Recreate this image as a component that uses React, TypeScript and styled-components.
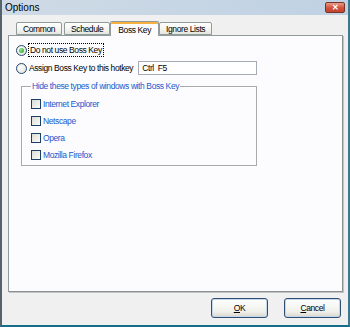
import React from "react";
import styled, { createGlobalStyle } from "styled-components";

const Global = createGlobalStyle`
  html, body { margin: 0; padding: 0; background: #f0f0f0; }
  body { font-family: "Liberation Sans", Arial, sans-serif; }
  * { box-sizing: border-box; }
`;

const Window = styled.div`
  width: 350px;
  height: 327px;
  display: flex;
  flex-direction: column;
  background: #f0f0f0;
  border-left: 2px solid #56626c;
  border-right: 2px solid #3e7890;
  border-bottom: 2px solid #147088;
  overflow: hidden;
`;

const TitleBar = styled.div`
  height: 15px;
  display: flex;
  align-items: center;
  justify-content: space-between;
  padding: 0 3px 0 3px;
  background: linear-gradient(to right, #cfdbe6, #bfd1e3);
`;

const Title = styled.span`
  font-size: 10px;
  color: #000;
`;

const CloseButton = styled.div`
  width: 20px;
  height: 11px;
  border-radius: 2px;
  border: 1px solid #7a3426;
  background: linear-gradient(#e89a88, #d2503a 55%, #c54431);
  color: #fff;
  font-size: 8px;
  font-weight: bold;
  display: flex;
  align-items: center;
  justify-content: center;
  line-height: 1;
`;

const Body = styled.div`
  flex: 1;
  display: flex;
  flex-direction: column;
  padding: 6px 5px 0 6px;
  font-size: 8.5px;
  letter-spacing: -0.4px;
`;

const TabStrip = styled.div`
  display: flex;
  align-items: flex-end;
  height: 14px;
  padding-left: 7px;
  position: relative;
  z-index: 1;
`;

const Tab = styled.div<{ $active?: boolean }>`
  color: #000;
  height: ${(p) => (p.$active ? "15px" : "13px")};
  padding: 0 ${(p) => (p.$active ? "7px" : "6px")};
  margin: 0 ${(p) => (p.$active ? "-1px" : "1px")};
  display: flex;
  align-items: center;
  border: 1px solid #919b9c;
  border-bottom: ${(p) => (p.$active ? "none" : "1px solid #919b9c")};
  border-radius: 2px 2px 0 0;
  background: ${(p) =>
    p.$active ? "#fcfcfe" : "linear-gradient(#ffffff, #f3f3ef 60%, #e6e6e0)"};
  box-shadow: ${(p) => (p.$active ? "inset 0 2px 0 #f5b240" : "none")};
  margin-bottom: ${(p) => (p.$active ? "-1px" : "0")};
  padding-top: ${(p) => (p.$active ? "2px" : "0")};
`;

const Panel = styled.div`
  height: 257px;
  background: #fcfcfe;
  border: 1px solid #919b9c;
  border-right-color: #8a9091;
  border-bottom-color: #8a9091;
  box-shadow: 1px 1px 0 #c4c4c4;
  display: flex;
  flex-direction: column;
  padding: 7px 0 0 7px;
`;

const OptionRow = styled.div`
  height: 14px;
  display: flex;
  align-items: center;
  gap: 2px;
  color: #000;
  margin-bottom: 4px;
`;

const Radio = styled.span<{ $checked?: boolean }>`
  width: 11px;
  height: 11px;
  border-radius: 50%;
  border: 1px solid #24486c;
  background: radial-gradient(circle at 40% 40%, #ffffff, #dcdcd4);
  display: flex;
  align-items: center;
  justify-content: center;
  &::after {
    content: "";
    display: ${(p) => (p.$checked ? "block" : "none")};
    width: 5px;
    height: 5px;
    border-radius: 50%;
    background: radial-gradient(circle at 35% 35%, #8de28d, #21a121);
  }
`;

const FocusLabel = styled.span`
  outline: 1px dotted #000;
  padding: 1px 1px;
`;

const Label = styled.span`
  padding: 1px 0;
`;

const HotkeyInput = styled.div`
  margin-left: 3px;
  width: 119px;
  height: 14px;
  border: 1px solid #a5acb5;
  background: #fff;
  padding: 0 3px;
  display: flex;
  align-items: center;
  white-space: pre;
`;

const GroupBox = styled.fieldset`
  margin: 2px 0 0 5px;
  padding: 7px 0 0 9px;
  width: 236px;
  height: 85px;
  border: 1px solid #a9a9a9;
  box-shadow: inset 1px 1px 0 #fff;
  display: flex;
  flex-direction: column;
  gap: 6px;
  min-inline-size: auto;
`;

const Legend = styled.legend`
  color: #2158cc;
  padding: 0 1px;
  margin-left: 0;
`;

const CheckRow = styled.label`
  display: flex;
  align-items: center;
  gap: 2px;
  height: 11px;
  color: #2158cc;
`;

const CheckBox = styled.span`
  width: 10px;
  height: 10px;
  border: 1px solid #1c3f64;
  background: linear-gradient(135deg, #dcdcd6, #fbfbf9);
`;

const ButtonRow = styled.div`
  display: flex;
  justify-content: flex-end;
  gap: 16px;
  padding: 6px 2px 0 0;
`;

const Button = styled.div`
  width: 57px;
  height: 20px;
  border: 1px solid #2f5075;
  border-radius: 3px;
  background: linear-gradient(#ffffff, #f0f0ea 70%, #d8d6cd);
  box-shadow: inset 0 0 0 1px #c5d5ea;
  color: #000;
  display: flex;
  align-items: center;
  justify-content: center;
  u { text-decoration: underline; }
`;

const checks = ["Internet Explorer", "Netscape", "Opera", "Mozilla Firefox"];

export default function App() {
  return (
    <>
      <Global />
      <Window>
        <TitleBar>
          <Title>Options</Title>
          <CloseButton>✕</CloseButton>
        </TitleBar>
        <Body>
          <TabStrip>
            <Tab>Common</Tab>
            <Tab>Schedule</Tab>
            <Tab $active>Boss Key</Tab>
            <Tab>Ignore Lists</Tab>
          </TabStrip>
          <Panel>
            <OptionRow>
              <Radio $checked />
              <FocusLabel>Do not use Boss Key</FocusLabel>
            </OptionRow>
            <OptionRow>
              <Radio />
              <Label>Assign Boss Key to this hotkey</Label>
              <HotkeyInput>Ctrl  F5</HotkeyInput>
            </OptionRow>
            <GroupBox>
              <Legend>Hide these types of windows with Boss Key</Legend>
              {checks.map((c) => (
                <CheckRow key={c}>
                  <CheckBox />
                  {c}
                </CheckRow>
              ))}
            </GroupBox>
          </Panel>
          <ButtonRow>
            <Button>
              <u>O</u>K
            </Button>
            <Button>
              <u>C</u>ancel
            </Button>
          </ButtonRow>
        </Body>
      </Window>
    </>
  );
}
